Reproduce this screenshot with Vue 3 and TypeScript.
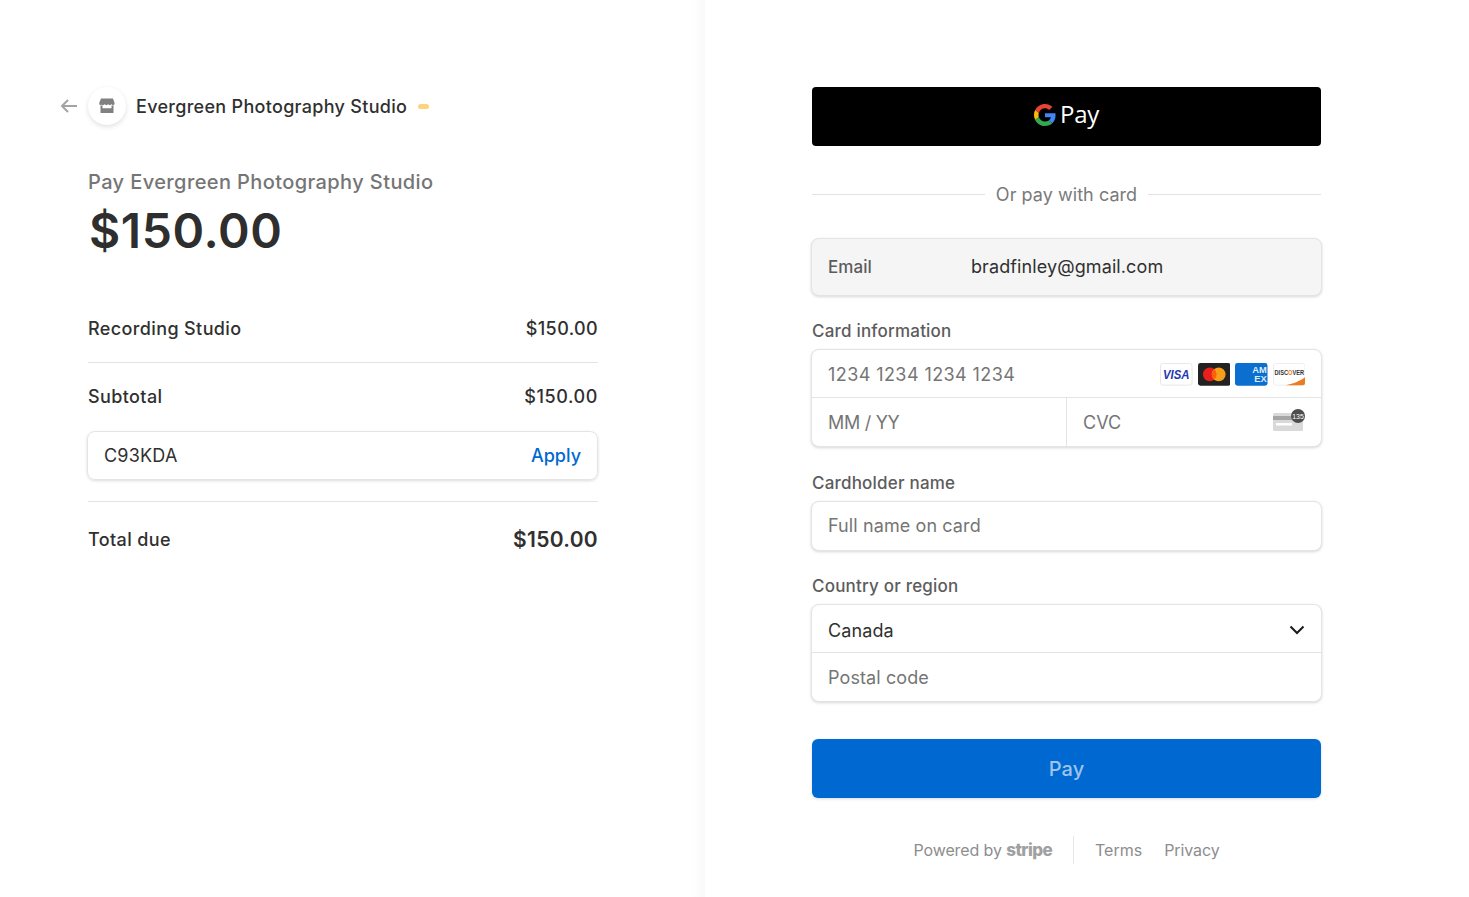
<script setup lang="ts">
const merchant: string = "Evergreen Photography Studio";
</script>

<template>
  <div class="page">
    <section class="left">
      <header class="head">
        <svg class="back" width="18" height="14" viewBox="0 0 18 14" fill="none"><path d="M17 7H2M8 1 2 7l6 6" stroke="#a3a3a3" stroke-width="2"/></svg>
        <div class="logo">
          <svg width="16" height="16" viewBox="0 0 16 16"><path d="M2 .5h12l1.500 4.300v1c0 .8-.6 1.400-1.300 1.400-.7 0-1.400-.5-1.700-1.100-.3.600-1 1.100-1.700 1.100S9.400 6.700 9 6.100c-.3.600-1 1.100-1.700 1.100s-1.300-.5-1.600-1.100c-.3.600-1 1.100-1.700 1.100-.6 0-1-.3-1.300-.8-.2.500-.6.800-1.200.8-.7 0-1.200-.6-1.200-1.400v-1z" fill="#808080"/><path d="M1.500 7.500h2v2.800h9V7.500h2V15h-13z" fill="#808080"/></svg>
        </div>
        <span class="merchant">{{ merchant }}</span>
        <span class="pill"></span>
      </header>
      <div class="summary">
        <div class="pay-to">Pay Evergreen Photography Studio</div>
        <div class="amount">$150.00</div>
        <div class="row item"><span>Recording Studio</span><span>$150.00</span></div>
        <div class="rule"></div>
        <div class="row subtotal"><span>Subtotal</span><span class="strong">$150.00</span></div>
        <div class="promo"><span class="code">C93KDA</span><span class="apply">Apply</span></div>
        <div class="rule rule2"></div>
        <div class="row total"><span>Total due</span><span class="total-amt">$150.00</span></div>
      </div>
    </section>
    <section class="right">
      <button class="gpay">
        <svg width="22" height="22" viewBox="0 0 48 48"><path fill="#EA4335" d="M24 9.500c3.500 0 6.700 1.200 9.200 3.600l6.900-6.900C35.900 2.400 30.500 0 24 0 14.600 0 6.500 5.400 2.600 13.200l8 6.200C12.400 13.700 17.700 9.500 24 9.500z"/><path fill="#4285F4" d="M47 24.500c0-1.600-.1-3.100-.4-4.500H24v9h12.900c-.6 3-2.200 5.400-4.700 7.100l7.700 6C44.400 37.900 47 31.800 47 24.500z"/><path fill="#FBBC05" d="M10.500 28.600c-.5-1.400-.8-3-.8-4.600s.3-3.200.8-4.600l-8-6.200C.9 16.500 0 20.100 0 24s.9 7.500 2.600 10.800z"/><path fill="#34A853" d="M24 48c6.500 0 11.900-2.100 15.900-5.900l-7.700-6c-2.100 1.500-4.900 2.300-8.200 2.300-6.300 0-11.600-4.200-13.500-9.900l-8 6.200C6.500 42.600 14.600 48 24 48z"/></svg>
        <span class="gpay-text">Pay</span>
      </button>
      <div class="or"><i></i><span>Or pay with card</span><i></i></div>
      <div class="email"><span class="email-label">Email</span><span class="email-val">bradfinley@gmail.com</span></div>
      <label class="lbl lbl-card">Card information</label>
      <div class="box">
        <div class="cell cardno">
          <span class="ph digits">1234 1234 1234 1234</span>
          <div class="brands">
            <svg class="brand" viewBox="0 0 33 23"><rect x=".5" y=".5" width="32" height="22" rx="2.500" fill="#fff" stroke="#e8e8e8"/><text x="16.500" y="16" text-anchor="middle" font-family="Liberation Sans" font-size="13" font-weight="700" font-style="italic" fill="#2438b0" textLength="27" lengthAdjust="spacingAndGlyphs">VISA</text></svg>
            <svg class="brand" viewBox="0 0 33 23"><rect width="33" height="23" rx="2.500" fill="#222"/><circle cx="12" cy="11.500" r="7" fill="#e8201c"/><circle cx="21" cy="11.500" r="7" fill="#f79e1b"/><path d="M16.500 6.200a7 7 0 0 1 0 10.600 7 7 0 0 1 0-10.600z" fill="#ff5f00"/></svg>
            <svg class="brand" viewBox="0 0 33 23"><rect width="33" height="23" rx="2.500" fill="#0a6fcf"/><text x="25" y="10.500" text-anchor="middle" font-family="Liberation Sans" font-size="9.500" font-weight="700" fill="#dcecfb">AM</text><text x="26" y="19.500" text-anchor="middle" font-family="Liberation Sans" font-size="9.500" font-weight="700" fill="#dcecfb">EX</text></svg>
            <svg class="brand" viewBox="0 0 33 23"><rect x=".5" y=".5" width="32" height="22" rx="2.500" fill="#fff" stroke="#eee"/><path d="M13 22.500c8-1.500 15-4.500 19.500-8v6a2 2 0 0 1-2 2z" fill="#ee7a22"/><text x="16.500" y="12.500" text-anchor="middle" font-family="Liberation Sans" font-size="6.500" font-weight="700" fill="#333" textLength="30" lengthAdjust="spacingAndGlyphs">DISC<tspan fill="#ee7a22">O</tspan>VER</text></svg>
          </div>
        </div>
        <div class="split">
          <div class="cell half"><span class="ph date">MM / YY</span></div>
          <div class="cell half cvc">
            <span class="ph">CVC</span>
            <svg class="cvc-ico" width="34" height="22" viewBox="0 0 34 22"><rect x="0" y="4" width="30" height="18" rx="1.500" fill="#d9d9d9"/><rect x="0" y="7" width="30" height="4" fill="#a6a6a6"/><rect x="3" y="14" width="16" height="2.500" fill="#fff"/><circle cx="25" cy="7" r="7" fill="#4d4d4d"/><text x="25" y="9.500" text-anchor="middle" font-family="Liberation Sans" font-size="7" fill="#fff">135</text></svg>
          </div>
        </div>
      </div>
      <label class="lbl lbl-name">Cardholder name</label>
      <div class="box"><div class="cell single"><span class="ph wide">Full name on card</span></div></div>
      <label class="lbl lbl-country">Country or region</label>
      <div class="box">
        <div class="cell country"><span class="wide">Canada</span>
          <svg width="16" height="10" viewBox="0 0 16 10" fill="none"><path d="M1.500 1.500 8 8l6.500-6.500" stroke="#1a1a1a" stroke-width="2"/></svg>
        </div>
        <div class="cell postal"><span class="ph wide">Postal code</span></div>
      </div>
      <button class="pay">Pay</button>
      <footer class="foot">
        <span class="powered">Powered by <b class="stripe">stripe</b></span>
        <i class="sep"></i>
        <span class="link">Terms</span>
        <span class="link">Privacy</span>
      </footer>
    </section>
  </div>
</template>

<style>
html, body { margin: 0; background: #fff; }
</style>

<style scoped>
.page {
  display: flex;
  height: 897px;
  overflow: hidden;
  font-family: Inter, "Liberation Sans", sans-serif;
  color: #303030;
  background: #fff;
}
.left {
  width: 705px;
  flex: none;
  box-sizing: border-box;
  padding: 87px 0 0 60px;
  background: linear-gradient(to right, #fff 98%, #f9f9f9 100%);
}
.head { display: flex; align-items: center; height: 38px; }
.back { margin-right: 10px; }
.logo {
  width: 38px;
  height: 38px;
  border-radius: 50%;
  background: #fff;
  box-shadow: 0 2px 5px rgba(0, 0, 0, .12);
  display: flex;
  align-items: center;
  justify-content: center;
}
.merchant { margin-left: 10px; padding-top: 2px; font-size: 18px; font-weight: 450; line-height: 36px; letter-spacing: .3px; }
.pill { width: 11px; height: 5px; border-radius: 3px; background: #fdd37e; margin-left: 11px; }
.summary { margin-left: 28px; width: 510px; padding-top: 43px; }
.pay-to { font-size: 20px; font-weight: 450; line-height: 28px; color: #757575; letter-spacing: .4px; }
.amount { font-size: 48px; font-weight: 600; line-height: 58px; margin-top: 6px; margin-left: 1px; letter-spacing: .6px; color: #2e2e2e; }
.row { display: flex; justify-content: space-between; font-weight: 450; font-size: 18px; letter-spacing: .38px; }
.item { margin-top: 57px; line-height: 24px; }
.rule { height: 1px; background: #e3e3e3; margin-top: 21px; }
.subtotal { margin-top: 22px; line-height: 24px; }
.strong { font-weight: 550; letter-spacing: .6px; }
.promo {
  margin: 22px 0 0 -1px;
  height: 49px;
  box-sizing: border-box;
  padding: 0 16px 1px;
  border: 1px solid #e4e4e4;
  border-radius: 8px;
  box-shadow: 0 1px 3px rgba(0, 0, 0, .14);
  display: flex;
  align-items: center;
  justify-content: space-between;
  font-size: 18px;
}
.code { letter-spacing: .2px; }
.apply { color: #0069d1; font-weight: 450; }
.rule2 { margin-top: 21px; }
.total { margin-top: 25px; line-height: 26px; align-items: center; }
.total-amt { font-size: 21px; font-weight: 600; letter-spacing: .3px; }

.right { width: 509px; margin-left: 107px; padding-top: 87px; }
.gpay {
  width: 100%;
  height: 59px;
  background: #000;
  border: 0;
  border-radius: 4px;
  display: flex;
  align-items: center;
  justify-content: center;
  gap: 4px;
  color: #fff;
  font-family: "Open Sans", Roboto, sans-serif;
  font-size: 24px;
  padding: 0 0 3px;
}
.gpay-text { margin-bottom: 3px; letter-spacing: -.3px; }
.or { display: flex; align-items: center; gap: 11px; margin-top: 36px; height: 24px; font-size: 18px; color: #7a7a7a; letter-spacing: .05px; }
.or i { flex: 1; height: 1px; background: #e3e3e3; }
.email {
  margin: 32px -1px 0;
  height: 58px;
  box-sizing: border-box;
  border: 1px solid #e4e4e4;
  border-radius: 8px;
  background: #f5f5f5;
  box-shadow: 0 1px 3px rgba(0, 0, 0, .16);
  display: flex;
  align-items: center;
  padding: 0 16px;
  font-size: 18px;
}
.email-label { width: 143px; font-weight: 450; color: #5c5c5c; font-size: 17px; letter-spacing: .08px; }
.email-val { color: #303030; letter-spacing: .1px; padding-bottom: 2px; }
.lbl { display: block; font-size: 17px; font-weight: 450; line-height: 22px; color: #5c5c5c; letter-spacing: .2px; }
.lbl-card { margin-top: 24px; }
.lbl-name { margin-top: 25px; }
.lbl-country { margin-top: 24px; }
.box {
  margin: 7px -1px 0;
  border: 1px solid #e4e4e4;
  border-radius: 8px;
  box-shadow: 0 1px 3px rgba(0, 0, 0, .16);
  background: #fff;
  overflow: hidden;
}
.cell {
  display: flex;
  align-items: center;
  justify-content: space-between;
  box-sizing: border-box;
  padding: 0 16px;
  height: 48px;
  font-size: 18px;
}
.ph { color: #757575; }
.wide { letter-spacing: .1px; }
.digits { letter-spacing: .42px; }
.date { letter-spacing: -.3px; }
.cardno { height: 47px; padding-top: 2px; }
.brands { display: flex; gap: 5px; }
.brand { display: block; width: 32.5px; height: 22.65px; }
.split { display: flex; border-top: 1px solid #e4e4e4; }
.half { flex: 1; height: 48px; }
.cvc { border-left: 1px solid #e4e4e4; position: relative; }
.cvc-ico { position: absolute; right: 14px; top: 11px; }
.single { height: 48px; padding-bottom: 2px; }
.country { height: 47px; padding-top: 3px; }
.postal { height: 49px; border-top: 1px solid #e4e4e4; padding-top: 1px; }
.pay {
  display: block;
  width: 100%;
  height: 59px;
  margin-top: 37px;
  background: #0069d1;
  border: 0;
  border-radius: 6px;
  box-shadow: 0 1px 3px rgba(0, 0, 0, .15);
  color: #9fc3ea;
  font-family: inherit;
  font-size: 20px;
  font-weight: 450;
}
.foot {
  display: flex;
  align-items: center;
  justify-content: center;
  margin-top: 38px;
  height: 28px;
  font-size: 16px;
  color: #8d8d8d;
}
.powered { letter-spacing: -.1px; }
.stripe { font-weight: 800; font-size: 17px; letter-spacing: -.6px; color: #a0a0a0; }
.sep { width: 1px; height: 28px; background: #e6e6e6; margin: 0 21px 0 21px; }
.link { margin-right: 22px; }
.link:last-child { margin-right: 0; letter-spacing: -.1px; }
</style>
